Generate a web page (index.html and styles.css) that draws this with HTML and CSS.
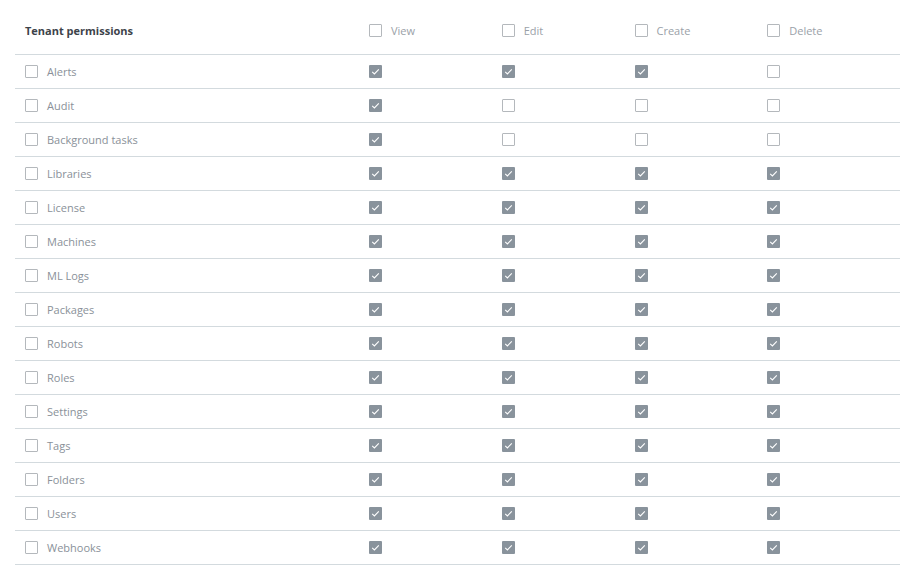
FILE: index.html
```html
<!DOCTYPE html>
<html>
<head>
<meta charset="utf-8">
<link rel="stylesheet" href="styles.css">
</head>
<body>
<div class="table">
  <div class="row head">
    <div class="cell first"><span class="title">Tenant permissions</span></div>
    <div class="cell"><span class="cb"></span><span class="hlabel">View</span></div>
    <div class="cell"><span class="cb"></span><span class="hlabel">Edit</span></div>
    <div class="cell"><span class="cb"></span><span class="hlabel">Create</span></div>
    <div class="cell"><span class="cb"></span><span class="hlabel">Delete</span></div>
  </div>
  <div id="rows"></div>
</div>
<script src="app.js"></script>
</body>
</html>
```
FILE: app.js
```js
var data = [
  ["Alerts", 1,1,1,0],
  ["Audit", 1,0,0,0],
  ["Background tasks", 1,0,0,0],
  ["Libraries", 1,1,1,1],
  ["License", 1,1,1,1],
  ["Machines", 1,1,1,1],
  ["ML Logs", 1,1,1,1],
  ["Packages", 1,1,1,1],
  ["Robots", 1,1,1,1],
  ["Roles", 1,1,1,1],
  ["Settings", 1,1,1,1],
  ["Tags", 1,1,1,1],
  ["Folders", 1,1,1,1],
  ["Users", 1,1,1,1],
  ["Webhooks", 1,1,1,1]
];
var check = '<svg viewBox="0 0 13 13" width="13" height="13"><path d="M3.2 6.8 L5.4 8.9 L9.8 4.3" fill="none" stroke="#fff" stroke-width="1.1"/></svg>';
var html = "";
data.forEach(function (r) {
  html += '<div class="row"><div class="cell first"><span class="cb"></span><span class="label">' + r[0] + '</span></div>';
  for (var i = 1; i < 5; i++) {
    html += '<div class="cell">' + (r[i] ? '<span class="cb on">' + check + '</span>' : '<span class="cb"></span>') + '</div>';
  }
  html += '</div>';
});
document.getElementById("rows").innerHTML = html;
```
FILE: styles.css
```css
html, body {
  margin: 0;
  padding: 0;
  background: #fff;
}
body {
  font-family: "Open Sans", "Noto Sans", "Liberation Sans", sans-serif;
  font-size: 11px;
  color: #8a9199;
}
.table {
  margin: 9px 16px 0 15px;
}
.row {
  display: grid;
  grid-template-columns: 354px 1fr 1fr 1fr 1fr;
  height: 34px;
  box-sizing: border-box;
  border-bottom: 1px solid #d3dade;
  align-items: center;
}
.row.head {
  height: 46px;
  padding-bottom: 2px;
}
.cell {
  display: flex;
  align-items: center;
}
.cell.first {
  padding-left: 10px;
}
.title {
  font-weight: 700;
  color: #3d434a;
}
.cb {
  width: 13px;
  height: 13px;
  box-sizing: border-box;
  border: 1px solid #b4b8bc;
  border-radius: 1px;
  background: #fff;
  flex: none;
  display: block;
}
.cb.on {
  border: none;
  background: #89939c;
}
.cb svg {
  display: block;
}
.label {
  margin-left: 9px;
  color: #8a9199;
}
.hlabel {
  margin-left: 9px;
  color: #9aa1a8;
}
```
